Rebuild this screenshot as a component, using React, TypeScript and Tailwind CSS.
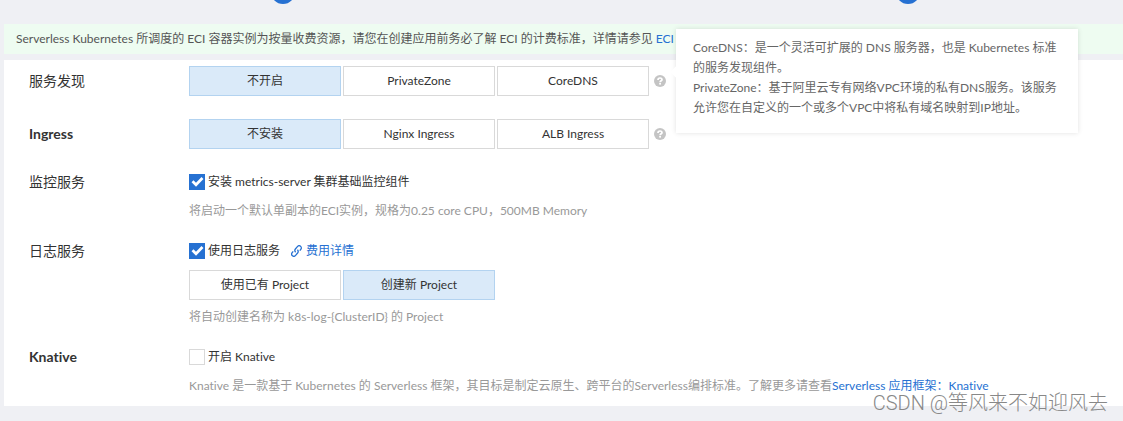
import { useState, type ReactNode } from "react";

const LINK = "text-[#2671d2] hover:underline";

function OptionGroup({ label, options, initial }: { label: string; options: string[]; initial: number }) {
  const [active, setActive] = useState(initial);
  return (
    <div role="group" aria-label={label} className="flex gap-0.5">
      {options.map((option, i) => (
        <button
          key={option}
          type="button"
          aria-pressed={i === active}
          onClick={() => setActive(i)}
          className={
            i === active
              ? "h-[30px] w-[152px] border border-[#b3d3f0] bg-[#daeaf9] text-[#333]"
              : "h-[30px] w-[152px] border border-[#d9d9d9] bg-white text-[#333]"
          }
        >
          {option}
        </button>
      ))}
    </div>
  );
}

function HelpIcon() {
  return (
    <svg viewBox="0 0 12 12" className="size-3" aria-hidden="true">
      <circle cx="6" cy="6" r="6" fill="#c4c4c4" />
      <path d="M4 5C4 3.500 4.900 3 6 3s2 .7 2 1.700C8 5.800 6.100 5.800 6.100 7.200" fill="none" stroke="#fff" strokeWidth="1.700" />
      <rect x="5.200" y="8" width="1.800" height="1.600" fill="#fff" />
    </svg>
  );
}

function Help({ label, children }: { label: string; children?: ReactNode }) {
  return (
    <span className="relative ml-[5px] flex">
      <button type="button" aria-label={label}>
        <HelpIcon />
      </button>
      {children}
    </span>
  );
}

function Tick({ id, label, initial }: { id: string; label: string; initial: boolean }) {
  const [checked, setChecked] = useState(initial);
  return (
    <label htmlFor={id} className="flex items-center gap-[3px]">
      <span className="grid size-4 place-items-center">
        <input
          id={id}
          type="checkbox"
          checked={checked}
          onChange={() => setChecked(!checked)}
          className="col-start-1 row-start-1 size-4 appearance-none border border-[#d9d9d9] bg-white checked:border-[#2671d2] checked:bg-[#2671d2]"
        />
        {checked && (
          <svg viewBox="0 0 16 16" className="pointer-events-none col-start-1 row-start-1 size-4" aria-hidden="true">
            <path d="M3.500 7.300L7 10.800L13.500 4" fill="none" stroke="#fff" strokeWidth="2.700" />
          </svg>
        )}
      </span>
      {label}
    </label>
  );
}

function Row({ title, bold, center, children }: { title: string; bold?: boolean; center?: boolean; children: ReactNode }) {
  return (
    <div className={center ? "flex items-center" : "flex items-start"}>
      <div className={bold ? "w-40 shrink-0 text-sm/5 font-bold" : "w-40 shrink-0 text-sm/5"}>{title}</div>
      <div className="min-w-0 flex-1">{children}</div>
    </div>
  );
}

function LinkIcon() {
  return (
    <svg viewBox="0 0 12 12" className="size-3" fill="none" stroke="currentColor" strokeWidth="1.300" aria-hidden="true">
      <path d="M4.600 7.200C3.600 6.200 3.700 4.900 4.400 4L6.400 1.600C7.200.6 8.600.5 9.500 1.200C10.500 2 10.600 3.400 9.800 4.400L8.800 5.600" />
      <path d="M6.400 4.800C7.400 5.800 7.300 7.100 6.600 8L4.600 10.400C3.800 11.400 2.400 11.500 1.500 10.800C.5 10 .4 8.600 1.200 7.600L2.200 6.400" />
    </svg>
  );
}

export default function App() {
  return (
    <main className="relative min-h-screen overflow-hidden bg-[#eff0f4] pl-1 font-['Lato','Noto_Sans_CJK_SC',sans-serif] text-xs/5 text-[#333] [font-variant-ligatures:none]">
      <div className="flex h-6 justify-between pr-[203px] pl-[267px]" aria-hidden="true">
        <span className="-mt-5 size-6 rounded-full bg-[#2671d2]" />
        <span className="-mt-5 size-6 rounded-full bg-[#2671d2]" />
      </div>
      <p className="truncate bg-[#eefcf1] px-3 py-[5px] text-[#555]">
        Serverless Kubernetes 所调度的 ECI 容器实例为按量收费资源，请您在创建应用前务必了解 ECI 的计费标准，详情请参见{" "}
        <a href="#pricing" className={LINK}>ECI 计</a>
      </p>

      <form className="mt-1.5 bg-white pt-1.5 pr-4 pb-2.5 pl-[25px]">
        <div className="flex flex-col gap-[23px] pb-[23px]">
          <Row title="服务发现" center>
            <div className="flex items-center">
              <OptionGroup label="服务发现" options={["不开启", "PrivateZone", "CoreDNS"]} initial={0} />
              <Help label="服务发现">
                <span
                  role="tooltip"
                  className="absolute -top-[46px] left-[22px] z-10 w-[402px] bg-white pt-[9px] pr-5 pb-[15px] pl-[17px] text-[#666] shadow-[0_0_5px_rgba(0,0,0,0.12)]"
                >
                  <span className="absolute top-[39px] -left-1 size-2 rotate-45 bg-white" />
                  CoreDNS：是一个灵活可扩展的 DNS 服务器，也是 Kubernetes 标准的服务发现组件。
                  <br />
                  PrivateZone：基于阿里云专有网络VPC环境的私有DNS服务。该服务允许您在自定义的一个或多个VPC中将私有域名映射到IP地址。
                </span>
              </Help>
            </div>
          </Row>
          <Row title="Ingress" bold center>
            <div className="flex items-center">
              <OptionGroup label="Ingress" options={["不安装", "Nginx Ingress", "ALB Ingress"]} initial={0} />
              <Help label="Ingress" />
            </div>
          </Row>
        </div>

        <div className="flex flex-col gap-5">
          <Row title="监控服务">
            <Tick id="metrics" label="安装 metrics-server 集群基础监控组件" initial />
            <p className="mt-[9px] text-[#999]">将启动一个默认单副本的ECI实例，规格为0.25 core CPU，500MB Memory</p>
          </Row>
          <Row title="日志服务">
            <div className="flex items-center gap-[11px]">
              <Tick id="logs" label="使用日志服务" initial />
              <a href="#fees" className={`flex items-center gap-[3px] ${LINK}`}>
                <LinkIcon />
                费用详情
              </a>
            </div>
            <div className="mt-[9px]">
              <OptionGroup label="Project" options={["使用已有 Project", "创建新 Project"]} initial={1} />
            </div>
            <p className="mt-[7px] text-[#999]">{"将自动创建名称为 k8s-log-{ClusterID} 的 Project"}</p>
          </Row>
          <Row title="Knative" bold>
            <Tick id="knative" label="开启 Knative" initial={false} />
            <p className="mt-[9px] text-[#999]">
              Knative 是一款基于 Kubernetes 的 Serverless 框架，其目标是制定云原生、跨平台的Serverless编排标准。了解更多请查看
              <a href="#knative-docs" className={LINK}>Serverless 应用框架：Knative</a>
            </p>
          </Row>
        </div>
      </form>

      <span className="pointer-events-none absolute right-[15px] bottom-1 font-['Roboto','Noto_Sans_CJK_SC',sans-serif] text-xl/7 font-light text-[#888]">
        CSDN @等风来不如迎风去
      </span>
    </main>
  );
}
